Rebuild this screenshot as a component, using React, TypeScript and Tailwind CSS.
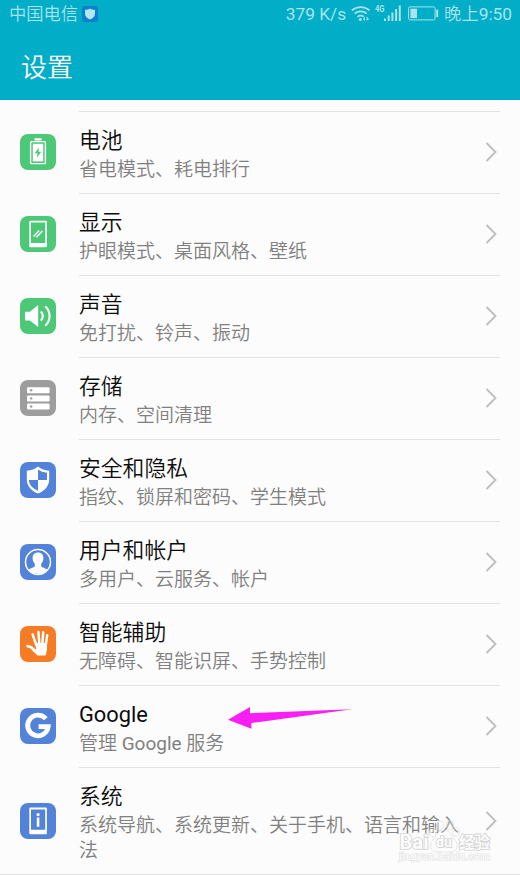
import type { ReactNode } from "react";

type SettingItem = {
  title: string;
  desc: string;
  color: string;
  icon: ReactNode;
};

const items: SettingItem[] = [
  {
    title: "电池",
    desc: "省电模式、耗电排行",
    color: "bg-[#4dc877]",
    icon: (
      <>
        <path d="M14.5 4.2h7v2.2h-7z" fill="#fff" />
        <rect x="10.6" y="7.6" width="14.8" height="22" rx="0.8" fill="none" stroke="#fff" strokeWidth="1.4" />
        <rect x="12.8" y="9.8" width="10.4" height="17.6" fill="#fff" />
        <path d="M19 13.5l-4.3 5.7h2.8l-.6 4.6 4.4-6h-2.8z" fill="#4dc877" />
      </>
    ),
  },
  {
    title: "显示",
    desc: "护眼模式、桌面风格、壁纸",
    color: "bg-[#4dc877]",
    icon: (
      <>
        <path
          d="M10.3 4.8h15.6a1 1 0 0 1 1 1v24.4a1 1 0 0 1-1 1H10.3a1 1 0 0 1-1-1V5.8a1 1 0 0 1 1-1zM11 6.6v20.4h14.2V6.6z"
          fill="#fff"
          fillRule="evenodd"
        />
        <path d="M13.6 20.4l5.6-5.8M16.4 21.2l6-6.2" stroke="#fff" strokeWidth="1.5" />
      </>
    ),
  },
  {
    title: "声音",
    desc: "免打扰、铃声、振动",
    color: "bg-[#4dc877]",
    icon: (
      <>
        <path d="M5 13.8h4.8L18.2 7v22l-8.4-6.6H5z" fill="#fff" />
        <path
          d="M20.8 13.4a6.5 6.5 0 0 1 0 9.4M25.2 8.2a13.2 13.2 0 0 1 0 19.6"
          fill="none"
          stroke="#fff"
          strokeWidth="2.1"
        />
      </>
    ),
  },
  {
    title: "存储",
    desc: "内存、空间清理",
    color: "bg-[#9d9d9d]",
    icon: (
      <>
        <rect x="7" y="7.3" width="22.6" height="6" rx="1.2" fill="#fff" />
        <rect x="7" y="15.4" width="22.6" height="6" rx="1.2" fill="#fff" />
        <rect x="7" y="23.5" width="22.6" height="6" rx="1.2" fill="#fff" />
        <circle cx="11.2" cy="10.3" r="1.2" fill="#9d9d9d" />
        <circle cx="11.2" cy="18.4" r="1.2" fill="#9d9d9d" />
        <circle cx="11.2" cy="26.5" r="1.2" fill="#9d9d9d" />
      </>
    ),
  },
  {
    title: "安全和隐私",
    desc: "指纹、锁屏和密码、学生模式",
    color: "bg-[#5383d8]",
    icon: (
      <>
        <path
          d="M18 4.6c3 2.4 6.8 3.9 11.2 4.2v8.4c0 6.4-4 11.4-11.2 14.4C10.8 28.6 6.8 23.6 6.8 17.2V8.8C11.2 8.5 15 7 18 4.6z"
          fill="#fff"
        />
        <path d="M18 7.6c2.6 1.8 5.6 2.8 9 3.2V18h-9zM18 18v10.8C12.4 26.4 9.2 22.8 8.9 18z" fill="#5383d8" />
      </>
    ),
  },
  {
    title: "用户和帐户",
    desc: "多用户、云服务、帐户",
    color: "bg-[#5383d8]",
    icon: (
      <>
        <circle cx="18" cy="18" r="12.5" fill="none" stroke="#fff" strokeWidth="1.5" />
        <path
          d="M18 8.6c3.5 0 5.4 2.2 5.4 5.4 0 2.8-1.2 4.6-2.2 5.8v2.4c1 1.4 4.2 1.8 6.2 3.4-2.2 2.8-5.4 4.4-9.4 4.4s-7.2-1.6-9.4-4.4c2-1.6 5.2-2 6.2-3.4v-2.4c-1-1.2-2.2-3-2.2-5.8 0-3.2 1.9-5.4 5.4-5.4z"
          fill="#fff"
        />
      </>
    ),
  },
  {
    title: "智能辅助",
    desc: "无障碍、智能识屏、手势控制",
    color: "bg-[#f57c24]",
    icon: (
      <g fill="none" stroke="#fff" strokeLinecap="round" strokeLinejoin="round">
        <path d="M12.6 8.4l3.6 10.5M18.4 6l1 12M23.2 6.2l-.8 12M27.2 9.2l-1.6 11" strokeWidth="2.5" />
        <path d="M7.6 20.2c2.2.2 4.6 1.8 7 4.200" strokeWidth="2.8" />
        <path d="M15.800 17.500h10.600l.2 4.500-1.200 7h-7.800l-4.800-4.500 4-.8z" fill="#fff" strokeWidth="1" />
      </g>
    ),
  },
  {
    title: "Google",
    desc: "管理 Google 服务",
    color: "bg-[#5383d8]",
    icon: (
      <path d="M25.8 10.8A10.3 10.3 0 1 0 28.2 18.6H18.6" fill="none" stroke="#fff" strokeWidth="4.8" />
    ),
  },
  {
    title: "系统",
    desc: "系统导航、系统更新、关于手机、语言和输入法",
    color: "bg-[#5383d8]",
    icon: (
      <>
        <path
          d="M10.3 4.6h15.6a1 1 0 0 1 1 1v24.6a1 1 0 0 1-1 1H10.3a1 1 0 0 1-1-1V5.6a1 1 0 0 1 1-1zM11 6.5v20.2h14.2V6.5z"
          fill="#fff"
          fillRule="evenodd"
        />
        <circle cx="18.1" cy="11.6" r="1.6" fill="#fff" />
        <path d="M16.800 14.600h2.600v9.100h-2.600z" fill="#fff" />
      </>
    ),
  },
];

// Chinese glyphs use the lighter cut, Latin ones keep the regular weight
function MixedText({ text }: { text: string }) {
  return text.split(/([A-Za-z]+)/).map((part, i) =>
    i % 2 ? (
      <span key={i} className="font-normal">
        {part}
      </span>
    ) : (
      part
    )
  );
}

function StatusBar() {
  return (
    <div className="flex h-7 items-center justify-between pr-2 pl-[9px] text-[17.3px] text-[#a9e3ec]">
      <div className="flex items-center gap-1">
        <span className="leading-7 font-[350]">中国电信</span>
        <svg width="16" height="16" viewBox="0 0 16 16">
          <rect width="16" height="16" rx="3" fill="#0b80cc" />
          <path d="M8 2.4c1.6 1 3.2 1.3 5 1.4v3.8c0 2.8-1.8 4.8-5 6-3.2-1.2-5-3.2-5-6V3.8c1.8-.1 3.4-.4 5-1.4z" fill="#b5e4f2" />
        </svg>
      </div>
      <div className="flex items-center">
        <span className="leading-7">379 K/s</span>
        <svg className="mb-[2px] ml-[5px]" width="20" height="18" viewBox="0 0 20 18" fill="none" stroke="currentColor">
          <path d="M.8 6.4a13.5 13.5 0 0 1 17.8 0M3.6 9.6a9.6 9.6 0 0 1 12.2 0M6.4 12.8a5.4 5.4 0 0 1 6.4-.2" strokeWidth="1.7" />
          <circle cx="9.3" cy="15.6" r="1.5" fill="currentColor" stroke="none" />
          <path d="M14 12.4v4.6l-2-2zM15.6 17v-4.6l2.4 2.6z" fill="currentColor" stroke="none" />
        </svg>
        <svg className="mb-[2px] ml-[4px]" width="27" height="18" viewBox="0 0 27 18" fill="currentColor">
          <text x="0" y="8" fontSize="9" fontWeight="700" textLength="9.5" lengthAdjust="spacingAndGlyphs">4G</text>
          <rect x="9" y="14.5" width="2" height="2.5" />
          <rect x="12.7" y="11.5" width="2" height="5.5" />
          <rect x="16.4" y="8.5" width="2" height="8.5" />
          <rect x="20.1" y="5" width="2" height="12" />
          <rect x="23.8" y="1.5" width="2" height="15.5" />
        </svg>
        <svg className="mb-[2px] ml-[6px]" width="31" height="15" viewBox="0 0 31 15">
          <rect x=".6" y=".9" width="26.5" height="13" rx="1.5" fill="none" stroke="currentColor" />
          <rect x="2.4" y="2.7" width="6.6" height="9.4" fill="currentColor" />
          <rect x="28.2" y="3.7" width="2" height="7.4" fill="currentColor" />
        </svg>
        <span className="ml-[5px] leading-7">
          <span className="font-[350]">晚上</span>9:50
        </span>
      </div>
    </div>
  );
}

function SettingRow({ item }: { item: SettingItem }) {
  return (
    <div className="flex min-h-[82px] shrink-0 items-stretch pr-5 pl-5">
      <div className="flex w-[59px] shrink-0 items-center">
        <div className={`size-9 overflow-hidden rounded-lg ${item.color}`}>
          <svg width="36" height="36" viewBox="0 0 36 36">
            {item.icon}
          </svg>
        </div>
      </div>
      <div className="flex flex-1 items-center border-t border-[#e2e2e2]">
        <div className="w-[382px] self-start pt-[15px]">
          <h2 className="text-[21.8px] leading-[28px] font-[350] text-[#0c0c0c]">
            <MixedText text={item.title} />
          </h2>
          <p className="mt-[2px] text-[19px] leading-[25px] font-[350] text-[#808080]">
            <MixedText text={item.desc} />
          </p>
        </div>
        <svg className="mb-px ml-auto" width="18" height="24" viewBox="0 0 18 24" fill="none" stroke="#bdbdbd" strokeWidth="1.8">
          <path d="M4.500 3l9 9-9 9" />
        </svg>
      </div>
    </div>
  );
}

function Watermark() {
  return (
    <div className="absolute top-[820px] left-[396px]">
      <svg width="100" height="46" viewBox="0 0 100 46" fill="#fcfcfc" stroke="#dcdcdc" strokeWidth="1">
        <g fillOpacity="0.25" strokeOpacity="0.6">
          <ellipse cx="37" cy="12" rx="3.5" ry="4.5" />
          <ellipse cx="44" cy="5" rx="3.5" ry="4.5" />
          <ellipse cx="54" cy="5" rx="3.5" ry="4.5" />
          <ellipse cx="60" cy="12" rx="3.5" ry="4.5" />
          <path d="M48 10c7 0 7 6 11 10 4 5 2 12-4 12h-14c-7 0-8-7-4-12 4-4 4-10 11-10z" />
        </g>
        <g fontWeight="700" paintOrder="stroke" strokeWidth="1.6" stroke="#d2d2d2">
          <text x="3.5" y="29" fontSize="19.5" textLength="29" lengthAdjust="spacingAndGlyphs">Bai</text>
          <text x="40" y="27" fontSize="14" textLength="16" lengthAdjust="spacingAndGlyphs">du</text>
          <text x="63" y="28" fontSize="16" textLength="31" lengthAdjust="spacingAndGlyphs">经验</text>
        </g>
        <text x="3" y="40" fontSize="10.5" textLength="91" lengthAdjust="spacingAndGlyphs" paintOrder="stroke" stroke="#e0e0e0">
          jingyan.baidu.com
        </text>
      </svg>
    </div>
  );
}

export default function App() {
  return (
    <div className="relative flex h-[875px] w-[520px] flex-col overflow-hidden bg-[#fcfcfc] font-[Roboto,'Noto_Sans_CJK_SC',sans-serif]">
      <header className="h-[100px] shrink-0 bg-[#02adc7]">
        <StatusBar />
        <h1 className="pl-[21px] text-[26px] leading-[80px] font-[350] text-white">设置</h1>
      </header>

      <main className="flex flex-1 flex-col border-b border-[#e2e2e2] pt-[11px] *:last:flex-1">
        {items.map((item) => (
          <SettingRow key={item.title} item={item} />
        ))}
      </main>

      <svg className="absolute top-[705px] left-[228px]" width="126" height="26" viewBox="0 0 126 26">
        <path d="M0 14.8L22 2v6.2L124 4.2 23.4 18v5.8z" fill="#f81ef4" />
      </svg>
      <Watermark />
    </div>
  );
}
